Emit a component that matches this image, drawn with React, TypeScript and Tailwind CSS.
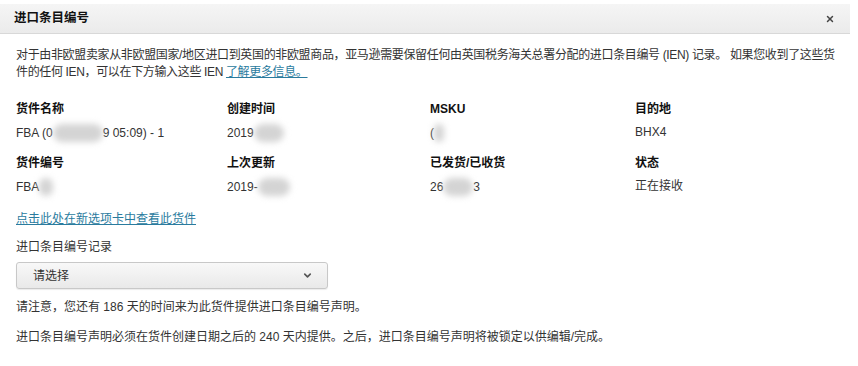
import React from 'react';
import { X, ChevronDown } from 'lucide-react';

const font = { fontFamily: '"Liberation Sans", "Noto Sans CJK SC", sans-serif' };

const Blur = ({ w, h = 18 }: { w: number; h?: number }) => (
  <span
    className="inline-block align-middle rounded-full bg-[#d4d4d4] blur-[3px]"
    style={{ width: w, height: h }}
  />
);

const Field = ({ label, children }: { label: string; children: React.ReactNode }) => (
  <div className="flex flex-col gap-[7px]">
    <span className="font-bold text-[#111] text-[12px] leading-[16px]">{label}</span>
    <span className="text-[#333] text-[12px] leading-[16px] flex items-center whitespace-nowrap">
      {children}
    </span>
  </div>
);

export default function App() {
  return (
    <div className="w-[858px] h-[366px] bg-white overflow-hidden pt-[4px]" style={font}>
      {/* Cabecera */}
      <div className="w-[850px] h-[30px] flex items-center justify-between px-[14px] bg-gradient-to-b from-[#f5f5f5] to-[#ebebeb] border-b border-[#d8d8d8]">
        <span className="font-bold text-[12.5px] text-[#111]">进口条目编号</span>
        <X className="w-[10px] h-[10px] text-[#444] mr-[1px]" strokeWidth={3.5} />
      </div>

      <div className="px-[16px] pt-[13px] text-[12px] text-[#333]">
        <p className="leading-[17px] tracking-[-0.35px] whitespace-nowrap">
          对于由非欧盟卖家从非欧盟国家/地区进口到英国的非欧盟商品，亚马逊需要保留任何由英国税务海关总署分配的进口条目编号 (IEN) 记录。 如果您收到了这些货
          <br />
          件的任何 IEN，可以在下方输入这些 IEN{' '}
          <a className="text-[#2a7b9e] underline">了解更多信息。</a>
        </p>

        {/* Datos del envío */}
        <div className="grid grid-cols-[211px_203px_205px_1fr] gap-y-[13px] mt-[20px]">
          <Field label="货件名称">
            FBA (0<Blur w={50} />9 05:09) - 1
          </Field>
          <Field label="创建时间">
            2019<Blur w={30} />
          </Field>
          <Field label="MSKU">
            (<Blur w={10} />
          </Field>
          <Field label="目的地">BHX4</Field>
          <Field label="货件编号">
            FBA<Blur w={14} />
          </Field>
          <Field label="上次更新">
            2019-<Blur w={32} />
          </Field>
          <Field label="已发货/已收货">
            26<Blur w={30} />3
          </Field>
          <Field label="状态">正在接收</Field>
        </div>

        <a className="block mt-[15px] text-[#2a7b9e] underline leading-[17px]">点击此处在新选项卡中查看此货件</a>

        <p className="mt-[11px] leading-[17px]">进口条目编号记录</p>
        <div className="mt-[6px] w-[312px] h-[27px] flex items-center justify-between pl-[16px] pr-[14px] rounded-[3px] border border-[#c8c8c8] bg-gradient-to-b from-[#f8f8f8] to-[#e9e9e9] shadow-[0_1px_1px_rgba(0,0,0,0.08)]">
          <span className="text-[#333]">请选择</span>
          <ChevronDown className="w-[11px] h-[11px] text-[#555]" strokeWidth={3.5} />
        </div>

        <p className="mt-[10px] leading-[17px]">请注意，您还有 186 天的时间来为此货件提供进口条目编号声明。</p>
        <p className="mt-[13px] leading-[17px]">进口条目编号声明必须在货件创建日期之后的 240 天内提供。之后，进口条目编号声明将被锁定以供编辑/完成。</p>
      </div>
    </div>
  );
}
